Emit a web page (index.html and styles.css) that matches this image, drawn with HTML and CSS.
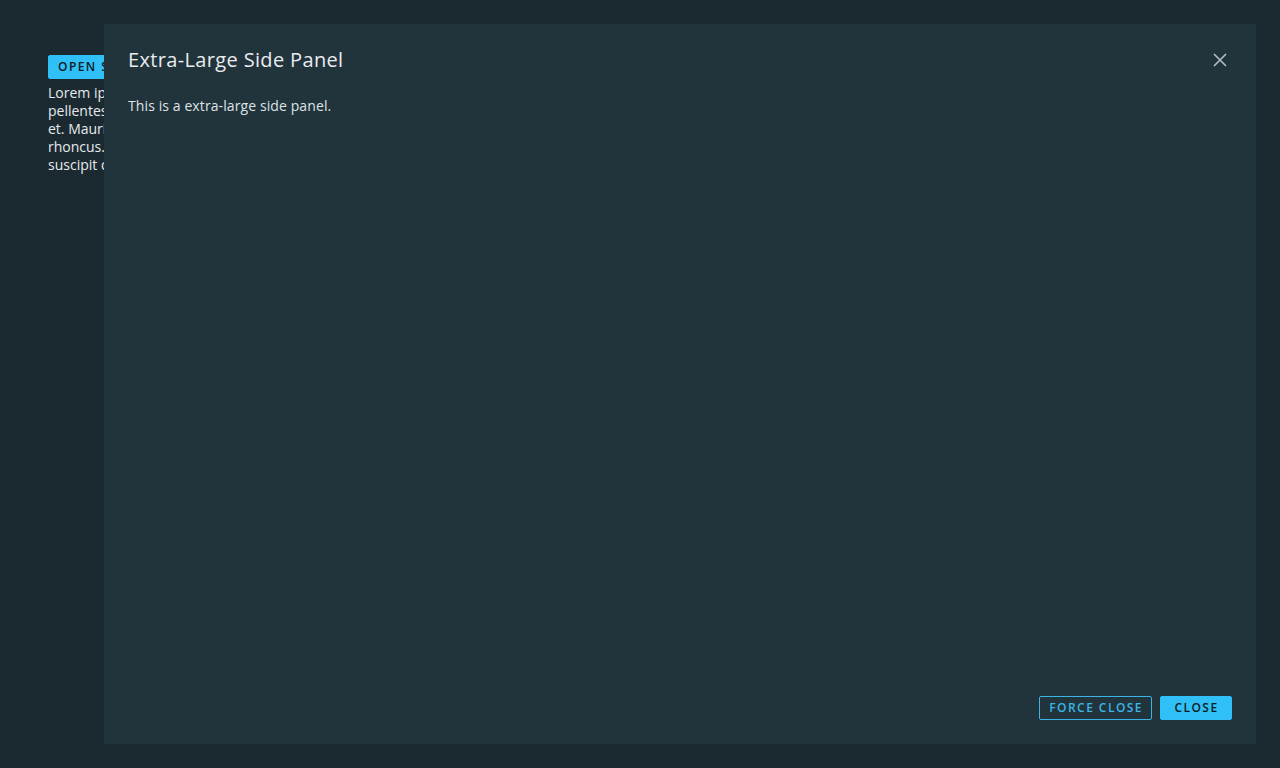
FILE: index.html
```html
<!DOCTYPE html>
<html>
<head>
<meta charset="utf-8">
<link rel="stylesheet" href="styles.css">
</head>
<body>
<main class="page">
  <button class="btn btn-primary">Open Side Panel</button>
  <p class="lorem">Lorem ipsum dolor sit amet, consectetur adipiscing elit. Nulla<br>pellentesque, nibh vitae volutpat tincidunt, arcu nisl rutrum<br>et. Mauris consequat, massa sed vestibulum ultrices, lorem<br>rhoncus. Quisque sed dui a sapien imperdiet aliquam vitae<br>suscipit quam, in commodo justo vulputate nec.</p>
</main>
<aside class="panel" role="dialog">
  <header class="panel-header">
    <h1 class="panel-title">Extra-Large Side Panel</h1>
    <button class="panel-close" aria-label="Close">
      <svg width="16" height="16" viewBox="0 0 16 16"><path d="M2 2 L14 14 M14 2 L2 14" stroke="#b3bec5" stroke-width="1.6" fill="none"/></svg>
    </button>
  </header>
  <div class="panel-body">
    <p>This is a extra-large side panel.</p>
  </div>
  <footer class="panel-footer">
    <button class="btn btn-outline">Force Close</button>
    <button class="btn btn-primary">Close</button>
  </footer>
</aside>
</body>
</html>
```
FILE: styles.css
```css
html, body {
  margin: 0;
  height: 100%;
}
body {
  background: #1b2a31;
  font-family: "Open Sans", "Lato", sans-serif;
  color: #e9ecef;
  overflow: hidden;
}
.page {
  padding: 54px 48px;
}
.btn {
  font-family: "Open Sans", sans-serif;
  font-weight: 600;
  font-size: 12px;
  letter-spacing: 1.45px;
  text-transform: uppercase;
  height: 24px;
  min-width: 72px;
  padding: 0 8px 0 9px;
  border-radius: 2px;
  cursor: pointer;
  line-height: 22px;
  text-align: center;
  box-sizing: border-box;
}
.btn-primary {
  background: #30c0f7;
  border: 1px solid #30c0f7;
  color: #0b1a20;
}
.btn-outline {
  background: transparent;
  border: 1px solid #3bb4e6;
  color: #3bb4e6;
}
.lorem {
  margin: 5px 0 0;
  font-size: 14px;
  line-height: 18px;
  color: #e6eaec;
}
.panel {
  position: absolute;
  top: 24px;
  left: 104px;
  right: 24px;
  bottom: 24px;
  background: #21333b;
  display: flex;
  flex-direction: column;
  padding: 24px;
  box-sizing: border-box;
}
.panel-header {
  display: flex;
  align-items: center;
  justify-content: space-between;
  height: 24px;
}
.panel-title {
  margin: 0;
  font-size: 20px;
  font-weight: 400;
  letter-spacing: 0.35px;
  color: #e9ecef;
  position: relative;
  top: -1px;
}
.panel-close {
  background: none;
  border: 0;
  padding: 0;
  width: 24px;
  height: 24px;
  display: flex;
  align-items: center;
  justify-content: center;
}
.panel-body {
  flex: 1;
  padding-top: 25px;
}
.panel-body p {
  margin: 0;
  font-size: 14px;
  line-height: 18px;
  letter-spacing: 0.1px;
  color: #dfe3e6;
}
.panel-footer {
  display: flex;
  justify-content: flex-end;
  gap: 8px;
}
```
